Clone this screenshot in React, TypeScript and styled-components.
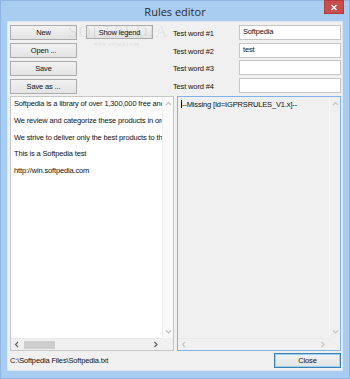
import React from "react";
import styled, { createGlobalStyle } from "styled-components";

const GlobalStyle = createGlobalStyle`
  html, body {
    margin: 0;
    padding: 0;
    width: 350px;
    height: 379px;
    overflow: hidden;
    background: #a9cdf1;
    font-family: "Liberation Sans", Arial, sans-serif;
  }
`;

const Window = styled.div`
  width: 350px;
  height: 379px;
  box-sizing: border-box;
  background: #a9cdf1;
  border: 1px solid #8fb6e0;
  display: flex;
  flex-direction: column;
  padding: 0 6px 7px 6px;
`;

const TitleBar = styled.div`
  height: 20px;
  position: relative;
  display: flex;
  align-items: center;
  justify-content: center;
  font-size: 11px;
  color: #2b2b2b;
  font-family: "Open Sans", "Liberation Sans", sans-serif;
`;

const CloseX = styled.div`
  position: absolute;
  right: -1px;
  top: -1px;
  width: 20px;
  height: 14px;
  background: #c84d4d;
  border: 1px solid #b23c3c;
  box-sizing: border-box;
  display: flex;
  align-items: center;
  justify-content: center;
`;

const Client = styled.div`
  flex: 1;
  background: #f0f0f0;
  border: 1px solid #d9e6f3;
  display: flex;
  flex-direction: column;
  padding: 3px 1px 2px 2px;
  font-size: 7.5px;
  letter-spacing: -0.15px;
  color: #111;
`;

const TopRow = styled.div`
  display: flex;
  align-items: flex-start;
`;

const ButtonColumn = styled.div`
  display: flex;
  flex-direction: column;
  gap: 3px;
`;

const WinButton = styled.div<{ $focus?: boolean; $short?: boolean }>`
  width: 67px;
  height: ${(p) => (p.$short ? 14 : 15)}px;
  box-sizing: border-box;
  border: 1px solid ${(p) => (p.$focus ? "#3c7fb1" : "#acacac")};
  box-shadow: ${(p) => (p.$focus ? "inset 0 0 0 1px #9cd2f5" : "none")};
  background: linear-gradient(#f2f2f2, #e3e3e3);
  display: flex;
  align-items: center;
  justify-content: center;
  font-size: 7.5px;
  color: #111;
`;

const LegendWrap = styled.div`
  margin-left: 9px;
  position: relative;
`;

const Watermark = styled.div`
  position: absolute;
  left: -18px;
  top: -3px;
  font-family: "Liberation Serif", serif;
  font-size: 17px;
  letter-spacing: 1px;
  color: rgba(0, 0, 0, 0.07);
  white-space: nowrap;
  pointer-events: none;
`;

const WatermarkUrl = styled.div`
  position: absolute;
  left: 8px;
  top: 16px;
  font-family: "Liberation Serif", serif;
  font-size: 6px;
  color: rgba(0, 0, 0, 0.12);
  white-space: nowrap;
`;

const Fields = styled.div`
  margin-left: 20px;
  display: grid;
  grid-template-columns: 66px 102px;
  row-gap: 2.6px;
  align-items: center;
`;

const Label = styled.div`
  font-size: 7.5px;
  color: #111;
  padding-top: 2px;
`;

const Input = styled.div`
  height: 15px;
  box-sizing: border-box;
  background: #fff;
  border: 1px solid #c6c6c6;
  padding: 1px 3px;
  font-size: 7.5px;
  color: #111;
  display: flex;
  align-items: flex-start;
`;

const Panes = styled.div`
  margin-top: 2px;
  display: flex;
  gap: 3px;
  height: 255px;
`;

const Pane = styled.div<{ $focus?: boolean }>`
  flex: 1;
  box-sizing: border-box;
  border: 1px solid ${(p) => (p.$focus ? "#7eb4ea" : "#c6c6c6")};
  background: ${(p) => (p.$focus ? "#f0f0f0" : "#fff")};
  display: grid;
  grid-template-columns: 1fr 11px;
  grid-template-rows: 1fr 12px;
  overflow: hidden;
`;

const TextArea = styled.div`
  padding: 3px 3px;
  overflow: hidden;
  white-space: nowrap;
  line-height: 8.4px;
  color: #111;
`;

const Para = styled.div`
  margin-bottom: 8.4px;
`;

const VScroll = styled.div<{ $dim?: boolean }>`
  background: ${(p) => (p.$dim ? "#f0f0f0" : "#fafafa")};
  border-left: 1px solid ${(p) => (p.$dim ? "#f7f7f7" : "#f0f0f0")};
  display: flex;
  flex-direction: column;
  justify-content: space-between;
  align-items: center;
  padding: 4px 0 3px;
`;

const HScroll = styled.div`
  background: #f0f0f0;
  border-top: 1px solid #e8e8e8;
  display: flex;
  align-items: center;
  padding: 0 3px;
  gap: 4px;
`;

const Arrow = styled.svg<{ $dim?: boolean }>`
  flex: 0 0 auto;
  stroke: ${(p) => (p.$dim ? "#c4c4c4" : "#606060")};
  fill: none;
  stroke-width: 1.2;
`;

const Track = styled.div`
  flex: 1;
  height: 100%;
  display: flex;
  align-items: center;
`;

const Thumb = styled.div`
  width: 31px;
  height: 8px;
  background: #cdcdcd;
`;

const Corner = styled.div`
  background: #f0f0f0;
`;

const Caret = styled.span`
  display: inline-block;
  width: 1px;
  height: 8px;
  background: #000;
  vertical-align: -1px;
`;

const Footer = styled.div`
  flex: 1;
  display: flex;
  align-items: flex-end;
  justify-content: space-between;
`;

const PathText = styled.div`
  align-self: center;
  font-size: 7.5px;
  color: #111;
  padding-top: 1px;
`;

const ArrowIcon: React.FC<{ dir: "up" | "down" | "left" | "right"; dim?: boolean }> = ({ dir, dim }) => {
  const d = {
    up: "M1 4 L3.5 1.5 L6 4",
    down: "M1 1.5 L3.5 4 L6 1.5",
    left: "M4 1 L1.5 3.5 L4 6",
    right: "M1.5 1 L4 3.5 L1.5 6",
  }[dir];
  const vertical = dir === "up" || dir === "down";
  return (
    <Arrow $dim={dim} width={vertical ? 7 : 6} height={vertical ? 6 : 7} viewBox={vertical ? "0 0 7 6" : "0 0 6 7"}>
      <path d={d} />
    </Arrow>
  );
};

const words = ["Softpedia", "test", "", ""];

const lines = [
  "Softpedia is a library of over 1,300,000 free and free-to-try software programs",
  "We review and categorize these products in order to allow the visitor/user to find the exact product they need",
  "We strive to deliver only the best products to the visitor/user together with self-made evaluation and review notes",
  "This is a Softpedia test",
  "http://win.softpedia.com",
];

export default function App() {
  return (
    <>
      <GlobalStyle />
      <Window>
        <TitleBar>
          Rules editor
          <CloseX>
            <svg width="8" height="7" viewBox="0 0 8 7">
              <path d="M1.5 1 L6.5 6 M6.5 1 L1.5 6" stroke="#fff" strokeWidth="1.4" />
            </svg>
          </CloseX>
        </TitleBar>
        <Client>
          <TopRow>
            <ButtonColumn>
              <WinButton>New</WinButton>
              <WinButton>Open ...</WinButton>
              <WinButton>Save</WinButton>
              <WinButton>Save as ...</WinButton>
            </ButtonColumn>
            <LegendWrap>
              <Watermark>SOFTPEDIA</Watermark>
              <WatermarkUrl>www.softpedia.com</WatermarkUrl>
              <WinButton $short>Show legend</WinButton>
            </LegendWrap>
            <Fields>
              {words.map((w, i) => (
                <React.Fragment key={i}>
                  <Label>Test word #{i + 1}</Label>
                  <Input>{w}</Input>
                </React.Fragment>
              ))}
            </Fields>
          </TopRow>
          <Panes>
            <Pane>
              <TextArea>
                {lines.map((l) => (
                  <Para key={l}>{l}</Para>
                ))}
              </TextArea>
              <VScroll>
                <ArrowIcon dir="up" dim />
                <ArrowIcon dir="down" dim />
              </VScroll>
              <HScroll>
                <ArrowIcon dir="left" />
                <Track>
                  <Thumb />
                </Track>
                <ArrowIcon dir="right" />
              </HScroll>
              <Corner />
            </Pane>
            <Pane $focus>
              <TextArea>
                <Caret />
                --Missing [Id=IGPRSRULES_V1.x]--
              </TextArea>
              <VScroll $dim>
                <ArrowIcon dir="up" dim />
                <ArrowIcon dir="down" dim />
              </VScroll>
              <HScroll>
                <ArrowIcon dir="left" dim />
                <Track />
                <ArrowIcon dir="right" dim />
              </HScroll>
              <Corner />
            </Pane>
          </Panes>
          <Footer>
            <PathText>C:\Softpedia Files\Softpedia.txt</PathText>
            <WinButton $focus>Close</WinButton>
          </Footer>
        </Client>
      </Window>
    </>
  );
}
